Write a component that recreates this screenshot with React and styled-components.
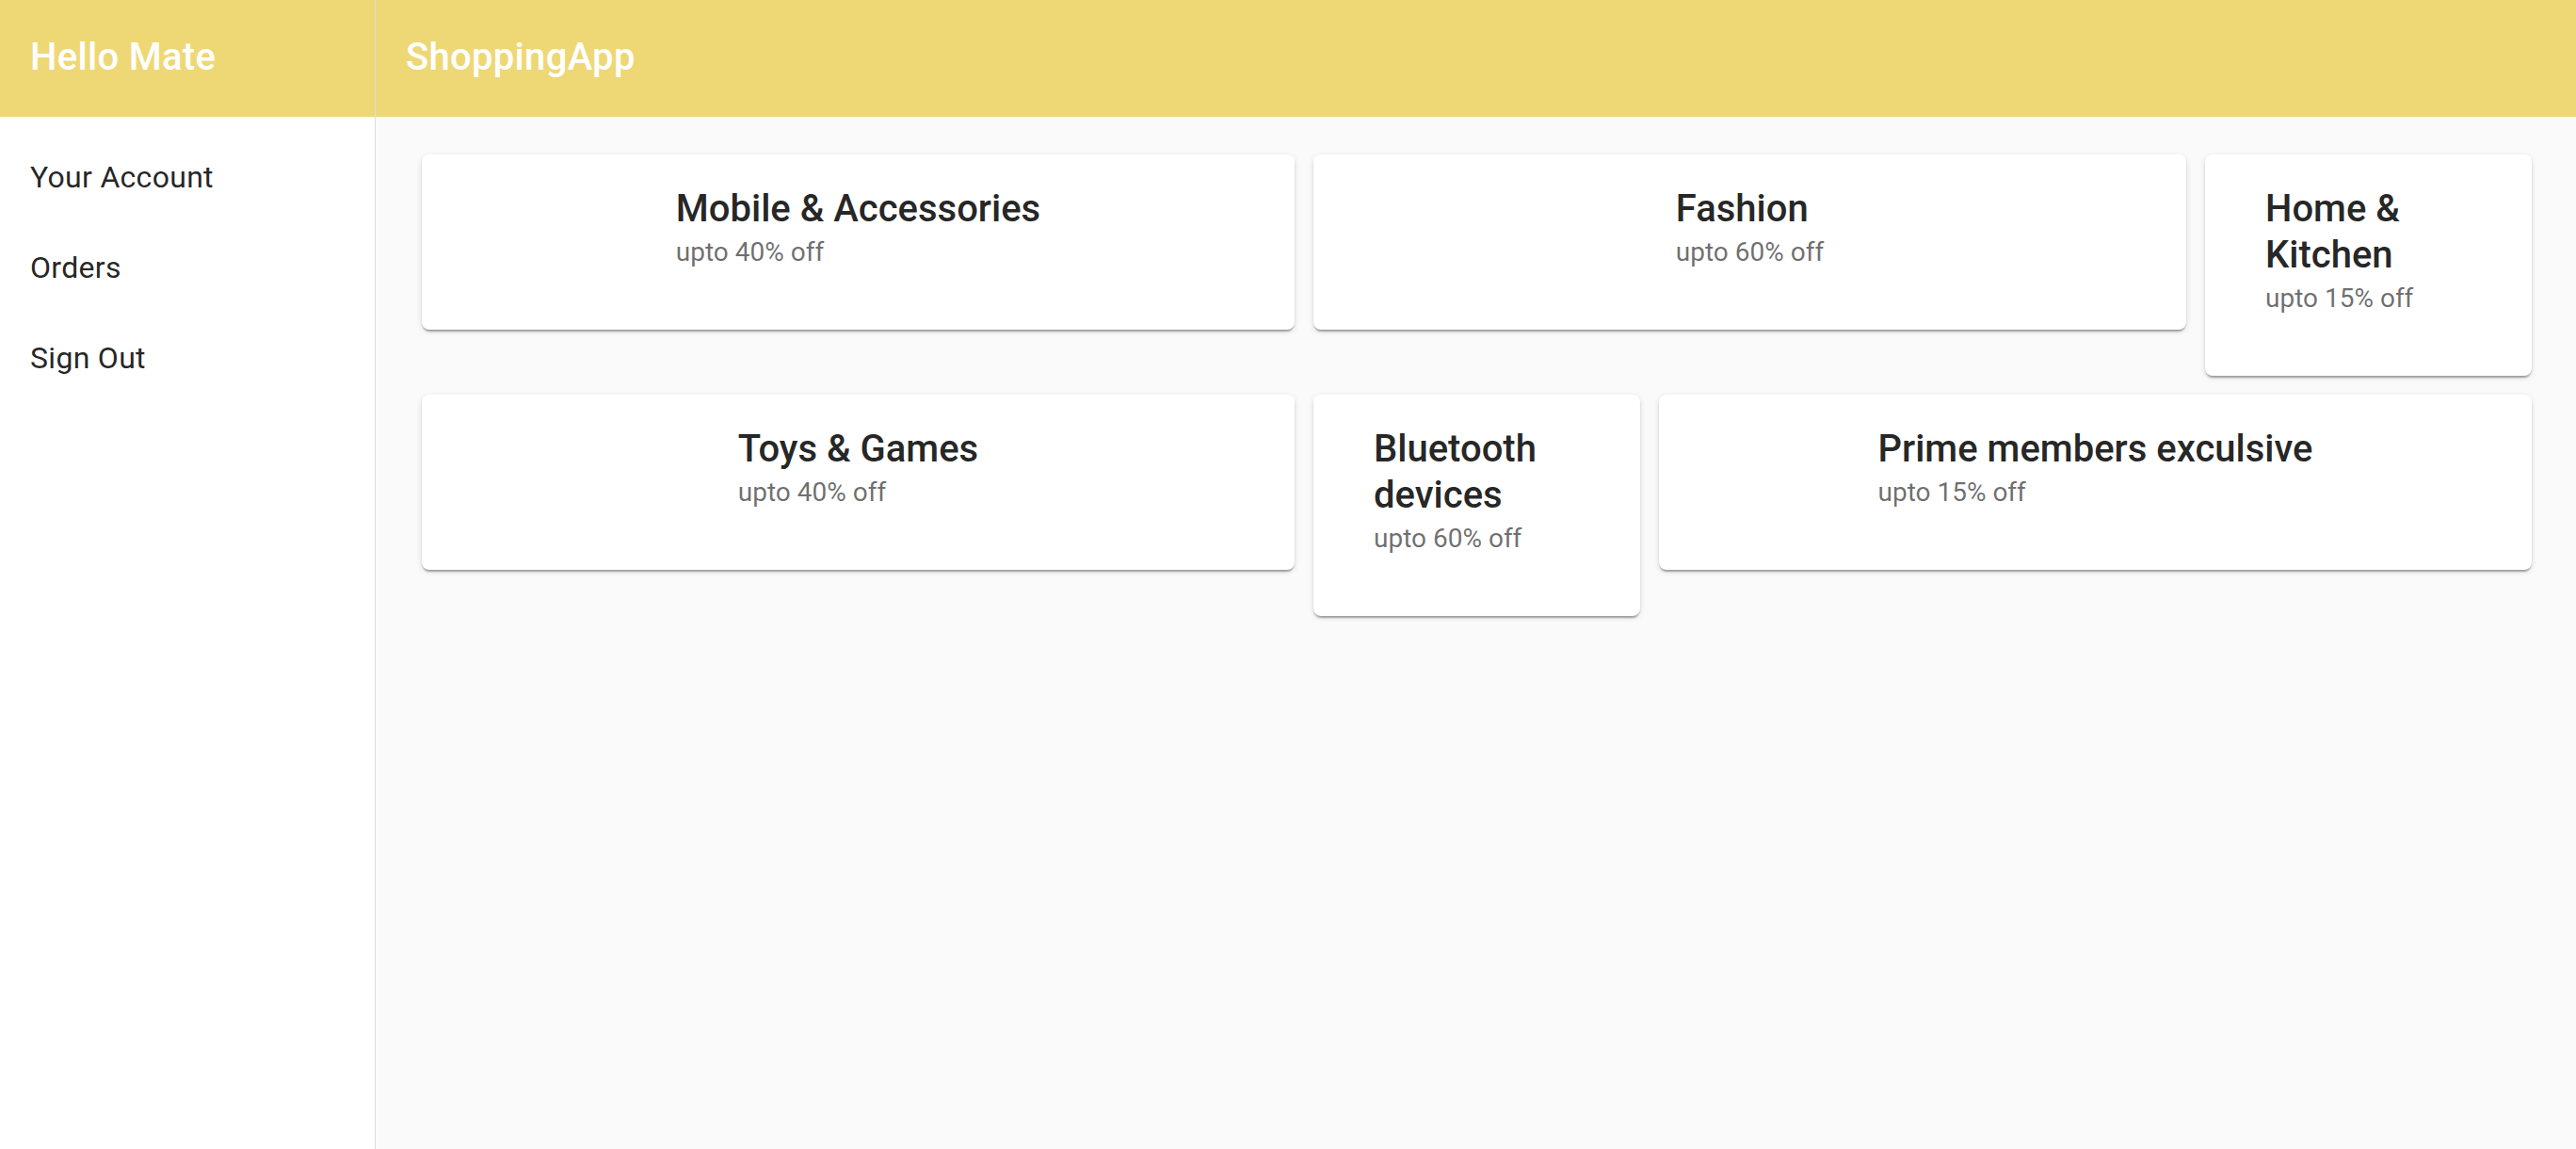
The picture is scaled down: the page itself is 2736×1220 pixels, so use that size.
import React from 'react';
import styled, { createGlobalStyle } from 'styled-components';

const GlobalStyle = createGlobalStyle`
  html, body {
    margin: 0;
    padding: 0;
    height: 100%;
  }
  body {
    font-family: Roboto, "Helvetica", "Arial", sans-serif;
    background-color: #fafafa;
  }
  #root {
    height: 100%;
  }
`;

const Layout = styled.div`
  display: flex;
  height: 100vh;
  width: 100%;
`;

const Sidebar = styled.aside`
  width: 398px;
  flex-shrink: 0;
  background-color: #ffffff;
  border-right: 1px solid #dedede;
  display: flex;
  flex-direction: column;
`;

const Bar = styled.header`
  height: 124px;
  flex-shrink: 0;
  display: flex;
  align-items: center;
  padding: 0 32px;
  padding-bottom: 3px;
  box-sizing: border-box;
  background-color: #eed876;
`;

const BarTitle = styled.h1`
  margin: 0;
  font-size: 40px;
  font-weight: 500;
  line-height: 1.6;
  letter-spacing: 0.0075em;
  color: #ffffff;
`;

const Menu = styled.ul`
  list-style: none;
  margin: 0;
  padding: 16px 0;
`;

const MenuItem = styled.li`
  padding: 24px 32px;
  font-size: 32px;
  line-height: 48px;
  letter-spacing: 0.00938em;
  color: rgba(0, 0, 0, 0.87);
  cursor: pointer;
`;

const Main = styled.main`
  flex: 1;
  display: flex;
  flex-direction: column;
  min-width: 0;
`;

const Content = styled.section`
  display: flex;
  flex-direction: column;
  gap: 20px;
  padding: 40px 47px 40px 49px;
`;

const Row = styled.div`
  display: flex;
  align-items: flex-start;
  gap: 20px;
`;

const Card = styled.div`
  ${props => props.$wide ? `
    flex: 1 1 0;
  ` : `
    width: 347px;
    flex-shrink: 0;
  `}
  display: flex;
  justify-content: center;
  box-sizing: border-box;
  padding: 33px 64px 60px;
  background-color: #ffffff;
  border-radius: 8px;
  box-shadow: 0 4px 2px -2px rgba(0, 0, 0, 0.2), 0 2px 2px 0 rgba(0, 0, 0, 0.14),
    0 2px 6px 0 rgba(0, 0, 0, 0.12);
`;

const CardBody = styled.div`
  min-width: 0;
`;

const CardTitle = styled.div`
  font-size: 40px;
  font-weight: 500;
  line-height: 49px;
  color: rgba(0, 0, 0, 0.87);
`;

const CardSub = styled.div`
  font-size: 28px;
  line-height: 44px;
  color: rgba(0, 0, 0, 0.58);
`;

const rows = [
  [
    { title: 'Mobile & Accessories', off: 40, wide: true },
    { title: 'Fashion', off: 60, wide: true },
    { title: 'Home & Kitchen', off: 15 }
  ],
  [
    { title: 'Toys & Games', off: 40, wide: true },
    { title: 'Bluetooth devices', off: 60 },
    { title: 'Prime members exculsive', off: 15, wide: true }
  ]
];

const menu = ['Your Account', 'Orders', 'Sign Out'];

const App = () => {
  return (
    <>
      <GlobalStyle />
      <Layout>
        <Sidebar>
          <Bar>
            <BarTitle>Hello Mate</BarTitle>
          </Bar>
          <Menu>
            {menu.map(item => (
              <MenuItem key={item}>{item}</MenuItem>
            ))}
          </Menu>
        </Sidebar>
        <Main>
          <Bar>
            <BarTitle>ShoppingApp</BarTitle>
          </Bar>
          <Content>
            {rows.map((row, i) => (
              <Row key={i}>
                {row.map(card => (
                  <Card key={card.title} $wide={card.wide}>
                    <CardBody>
                      <CardTitle>{card.title}</CardTitle>
                      <CardSub>upto {card.off}% off</CardSub>
                    </CardBody>
                  </Card>
                ))}
              </Row>
            ))}
          </Content>
        </Main>
      </Layout>
    </>
  );
};

export default App;
